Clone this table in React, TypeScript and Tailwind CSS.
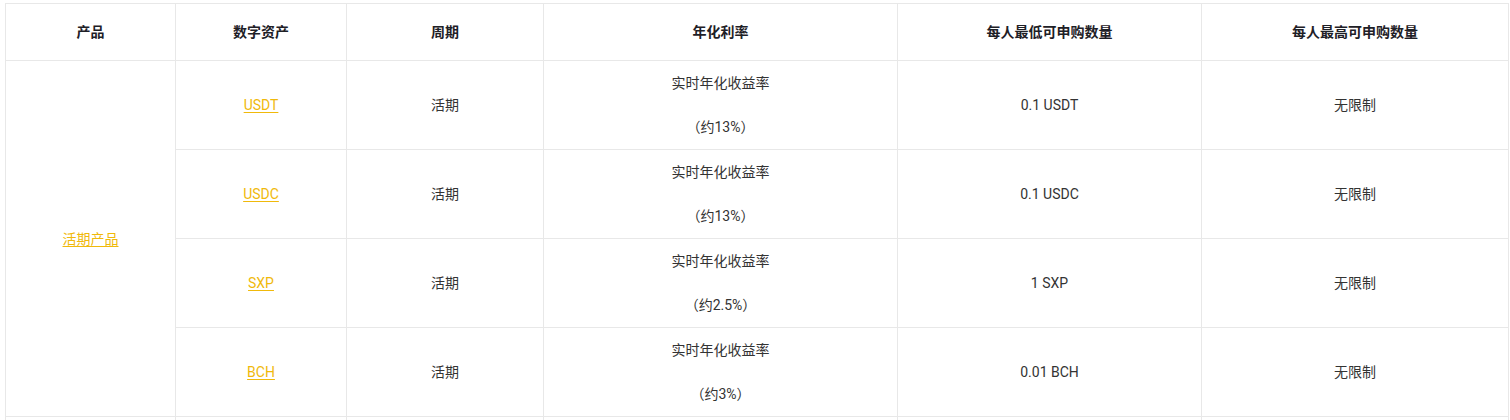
import React from "react";

const rows = [
  { asset: "USDT", rate: "（约13%）", min: "0.1 USDT" },
  { asset: "USDC", rate: "（约13%）", min: "0.1 USDC" },
  { asset: "SXP", rate: "（约2.5%）", min: "1 SXP" },
  { asset: "BCH", rate: "（约3%）", min: "0.01 BCH" },
];

const th = "border border-[#e8e8e8] text-center align-middle font-bold text-[14px] text-[#1e2026]";
const td = "border border-[#e8e8e8] text-center align-middle text-[14px] text-[#333333]";
const link = "text-[#f0b90b] underline underline-offset-2";

export default function App() {
  return (
    <div className="bg-white pl-[5px] pt-[3px] w-[1510px] h-[420px] overflow-hidden" style={{ fontFamily: 'Roboto, "Noto Sans CJK SC", sans-serif' }}>
      <table className="table-fixed border-collapse w-[1503px] leading-[22px]">
        <colgroup>
          <col className="w-[170px]" />
          <col className="w-[171px]" />
          <col className="w-[197px]" />
          <col className="w-[354px]" />
          <col className="w-[304px]" />
          <col className="w-[307px]" />
        </colgroup>
        <thead>
          <tr className="h-[57px]">
            <th className={th}>产品</th>
            <th className={th}>数字资产</th>
            <th className={th}>周期</th>
            <th className={th}>年化利率</th>
            <th className={th}>每人最低可申购数量</th>
            <th className={th}>每人最高可申购数量</th>
          </tr>
        </thead>
        <tbody>
          {rows.map((r, i) => (
            <tr key={r.asset} className="h-[89px]">
              {i === 0 && (
                <td className={td} rowSpan={4}>
                  <a className={link}>活期产品</a>
                </td>
              )}
              <td className={td}>
                <a className={link}>{r.asset}</a>
              </td>
              <td className={td}>活期</td>
              <td className={td}>
                <div>实时年化收益率</div>
                <div>&nbsp;</div>
                <div>{r.rate}</div>
              </td>
              <td className={td}>{r.min}</td>
              <td className={td}>无限制</td>
            </tr>
          ))}
          <tr className="h-[89px]">
            <td className={td}></td>
            <td className={td}></td>
            <td className={td}></td>
            <td className={td}></td>
            <td className={td}></td>
            <td className={td}></td>
          </tr>
        </tbody>
      </table>
    </div>
  );
}
